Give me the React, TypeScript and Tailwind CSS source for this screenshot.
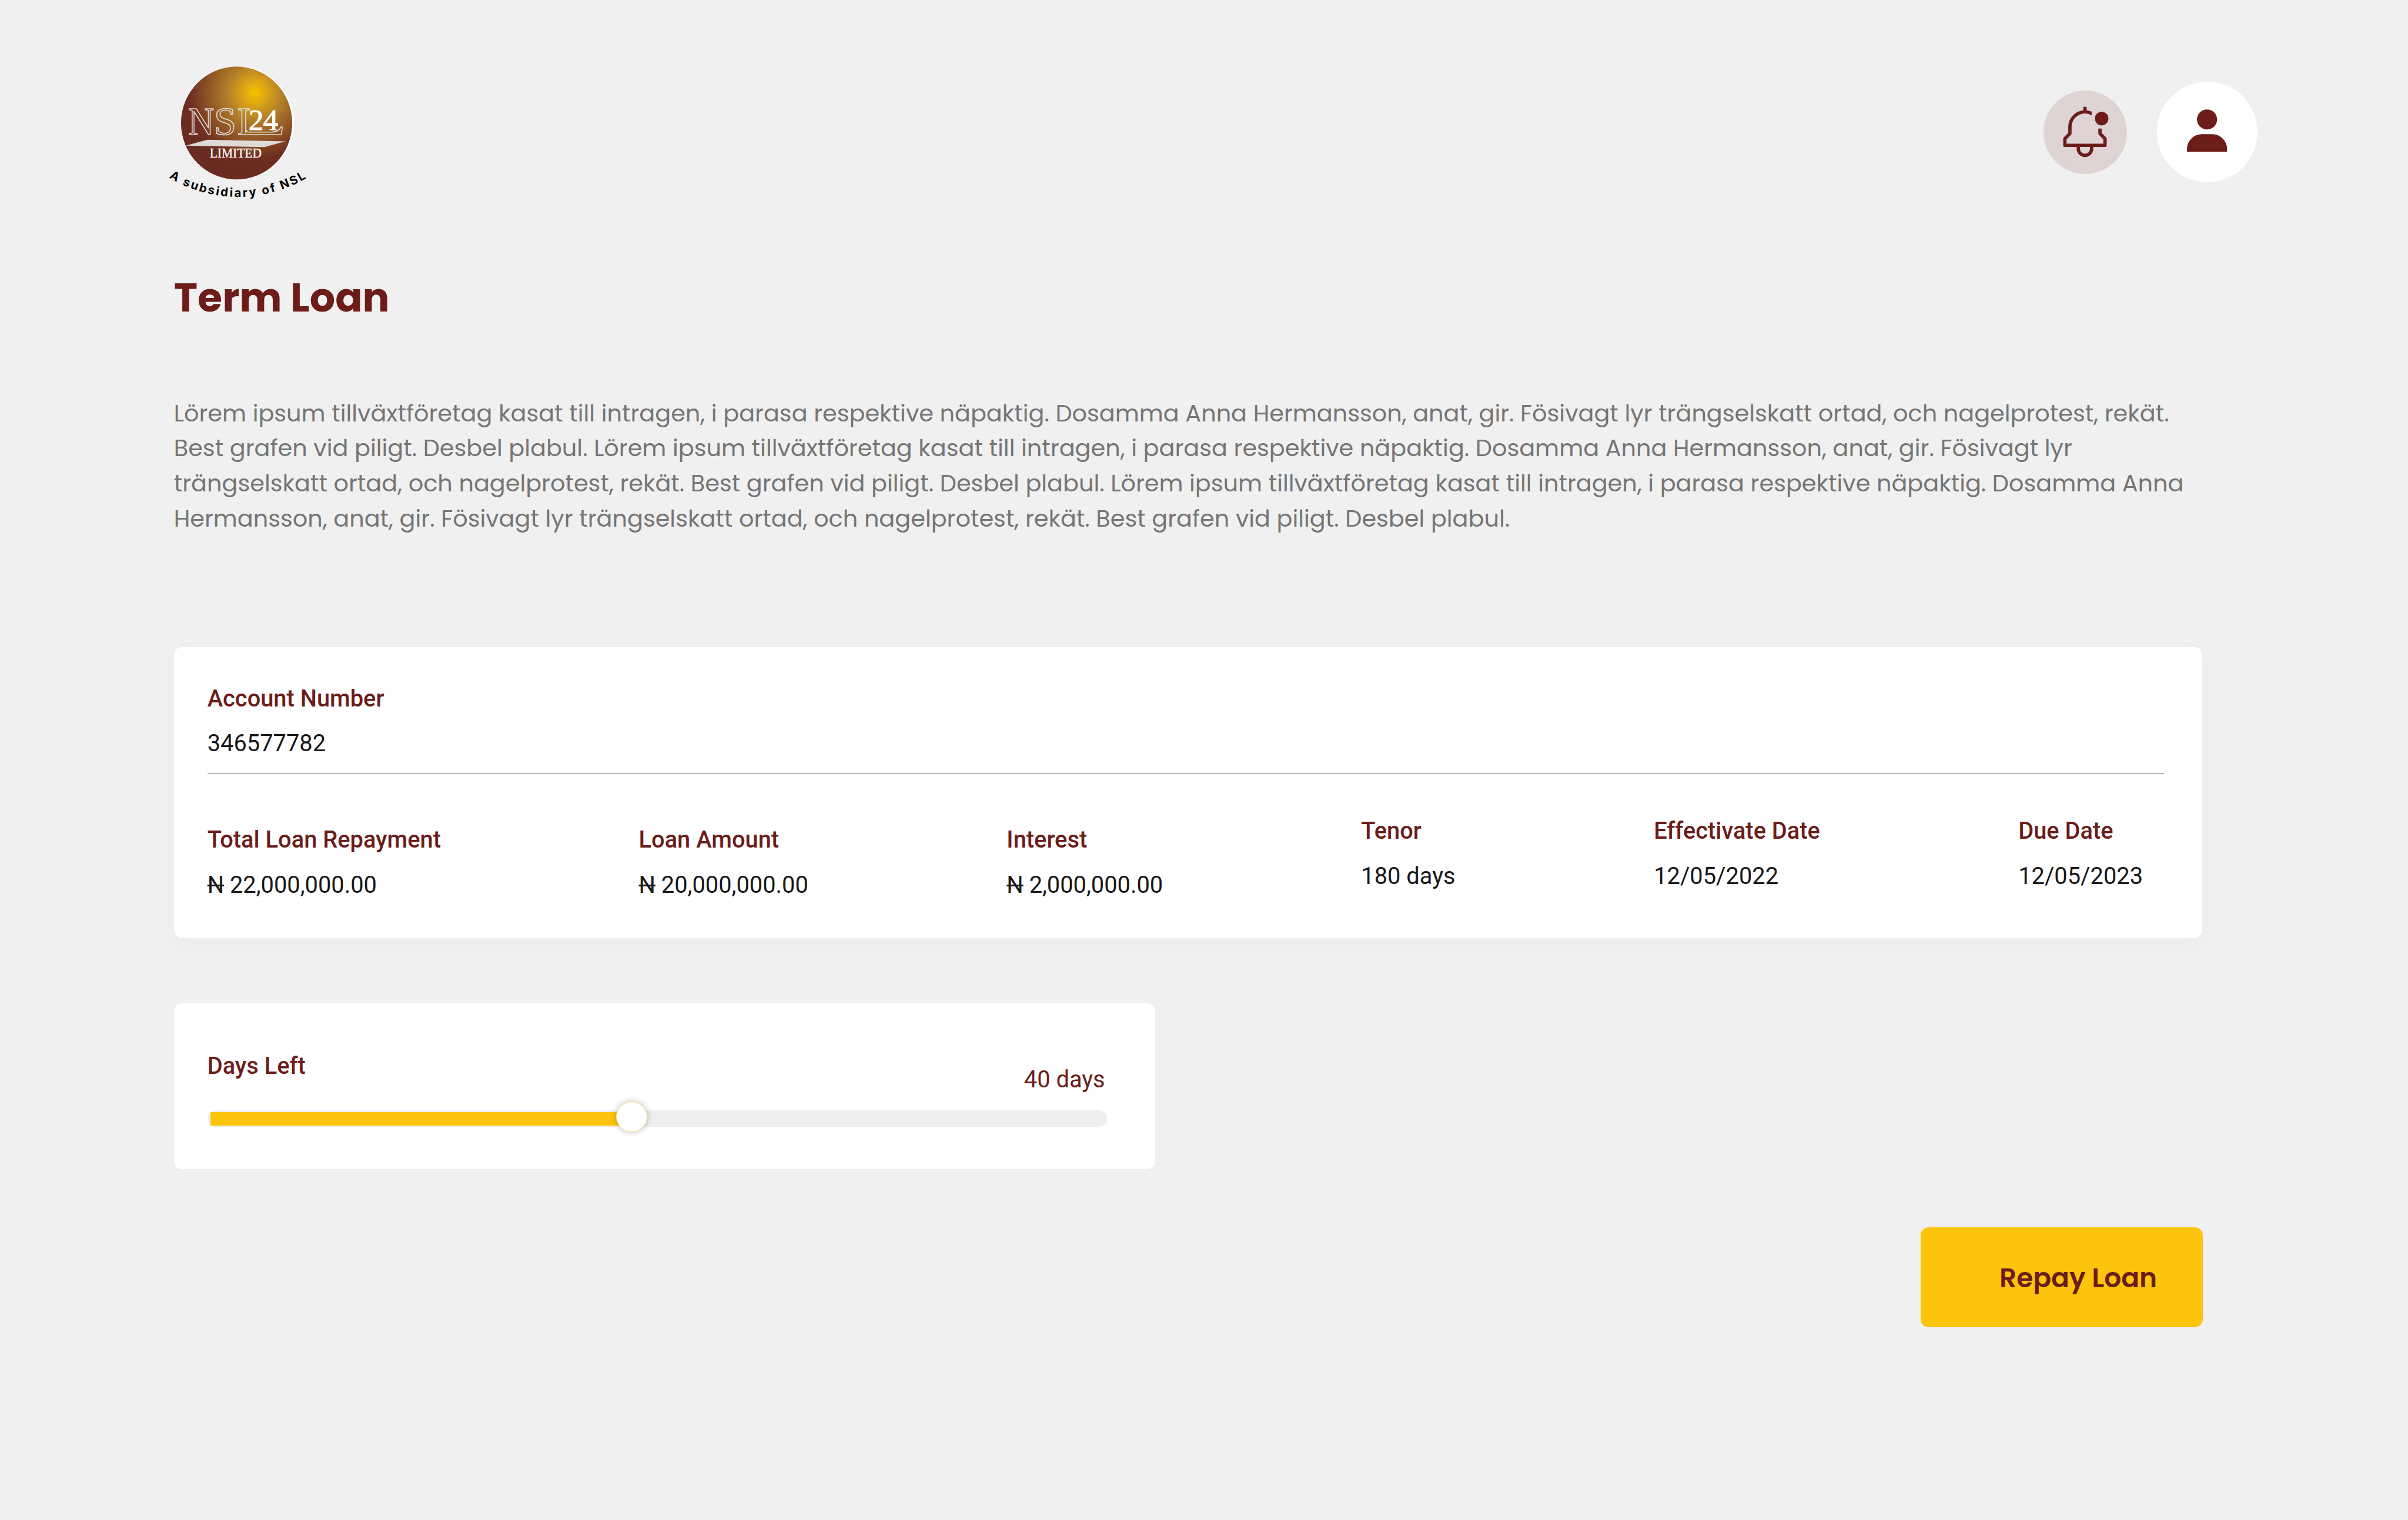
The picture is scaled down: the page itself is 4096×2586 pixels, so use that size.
const poppins = "font-['Poppins',Inter,sans-serif]";

const description = [
  "Lörem ipsum tillväxtföretag kasat till intragen, i parasa respektive näpaktig. Dosamma Anna Hermansson, anat, gir. Fösivagt lyr trängselskatt ortad, och nagelprotest, rekät.",
  "Best grafen vid piligt. Desbel plabul. Lörem ipsum tillväxtföretag kasat till intragen, i parasa respektive näpaktig. Dosamma Anna Hermansson, anat, gir. Fösivagt lyr",
  "trängselskatt ortad, och nagelprotest, rekät. Best grafen vid piligt. Desbel plabul. Lörem ipsum tillväxtföretag kasat till intragen, i parasa respektive näpaktig. Dosamma Anna",
  "Hermansson, anat, gir. Fösivagt lyr trängselskatt ortad, och nagelprotest, rekät. Best grafen vid piligt. Desbel plabul.",
];

function Logo() {
  return (
    <svg viewBox="0 0 1140 1080" className="h-[256px] w-[270.2px] shrink-0" role="img" aria-label="NSL24 Limited">
      <defs>
        <radialGradient id="globe" gradientUnits="userSpaceOnUse" cx="690" cy="280" r="560">
          <stop offset="0" stopColor="#f6c100" />
          <stop offset="0.14" stopColor="#dfa813" />
          <stop offset="0.34" stopColor="#b5812a" />
          <stop offset="0.6" stopColor="#8f5526" />
          <stop offset="0.84" stopColor="#6e2e20" />
          <stop offset="1" stopColor="#6a2b20" />
        </radialGradient>
        <clipPath id="stem">
          <path d="M540 360H654V545H628V600H540Z" />
        </clipPath>
        <path id="arc" d="M73 887A960 960 0 0 0 1070 884" />
      </defs>
      <ellipse cx="572" cy="495" rx="399" ry="405" fill="#fff" />
      <ellipse cx="559" cy="495" rx="399" ry="405" fill="url(#globe)" />
      <g fill="none" stroke="#dddbd8" strokeWidth="7" fontFamily="Liberation Serif" fontSize="288" strokeLinejoin="round">
        <text x="211" y="578" textLength="186" lengthAdjust="spacingAndGlyphs">N</text>
        <text x="397" y="578">S</text>
        <text x="564" y="578" clipPath="url(#stem)">L</text>
        <path d="M629 544Q629 560 650 560L810 560Q868 556 875 523L887 523L881 578L624 578" />
      </g>
      <g fill="#fff" stroke="#fff" strokeWidth="4" fontFamily="Liberation Serif" fontSize="217">
        <text x="645" y="543">2</text>
        <text x="749" y="543">4</text>
      </g>
      <path d="M795 545V540L815 536H832L846 540V545Z" fill="#fff" />
      <path d="M195 657L347 615L908 627L758 668Z" fill="#dddbd8" />
      <text x="366" y="742" fontFamily="Liberation Serif" fontSize="95" fill="#fff" stroke="#fff" strokeWidth="1.5" textLength="372" lengthAdjust="spacingAndGlyphs">LIMITED</text>
      <text fontFamily="Inter" fontWeight="700" fontSize="86" fill="#000" letterSpacing="11.6">
        <textPath href="#arc">A subsidiary of NSL</textPath>
      </text>
    </svg>
  );
}

function Header() {
  return (
    <header className="flex h-[256px] items-start">
      <Logo />
      <div className="mt-[61.2px] ml-[2935.5px] flex size-[142.2px] items-center justify-center rounded-full bg-[#dfd3d3]">
        <svg viewBox="0 0 32 32" className="size-[91px]" fill="#6c1d1a">
          <path d="M28.707 19.293L26 16.586V14h-2v3a1 1 0 0 0 .293.707L27 20.414V23H5v-2.586l2.707-2.707A1 1 0 0 0 8 17v-4a7.985 7.985 0 0 1 12-6.925V3.847a9.9 9.9 0 0 0-3-.796V1h-2v2.051A10.014 10.014 0 0 0 6 13v3.586l-2.707 2.707A1 1 0 0 0 3 20v4a1 1 0 0 0 1 1h7v1a5 5 0 0 0 10 0v-1h7a1 1 0 0 0 1-1v-4a1 1 0 0 0-.293-.707M19 26a3 3 0 0 1-6 0v-1h6z" />
          <circle cx="26" cy="8" r="4.05" />
        </svg>
      </div>
      <div className="mt-[47px] ml-[51.2px] flex size-[170.7px] justify-center rounded-full bg-white">
        <svg viewBox="0 0 96 102" className="mt-[47px] h-[72.5px] w-[68.3px]" fill="#6c1d1a">
          <circle cx="48" cy="24.3" r="24" />
          <path d="M0 101.5V95.5A36 36 0 0 1 36 59.3H60A36 36 0 0 1 96 95.5V101.5Z" />
        </svg>
      </div>
    </header>
  );
}

type FieldProps = { label: string; value: string; naira?: boolean; className?: string };

function Field({ label, value, naira, className = "" }: FieldProps) {
  return (
    <div className={`text-[39.82px] leading-[48px] whitespace-nowrap ${className}`}>
      <div className="font-medium text-[#6c1d1a]">{label}</div>
      <div className="mt-[28.4px] text-[#181818]">
        {naira && (
          <>
            <span className="line-through">N</span>{" "}
          </>
        )}
        {value}
      </div>
    </div>
  );
}

export default function App() {
  return (
    <div className="h-[2586px] w-[4096px] overflow-hidden bg-[#f0f0f0] pt-[92.4px] pl-[270.2px] font-['Roboto',sans-serif]">
      <Header />
      <main className="ml-[25.6px] w-[3450.3px]">
        <h1 className={`mt-[109.2px] text-[68.27px] leading-[96px] font-bold whitespace-nowrap text-[#6c1d1a] ${poppins}`}>
          Term Loan
        </h1>
        <div className={`mt-[120px] text-[39.82px] leading-[59.73px] whitespace-nowrap text-[#757575] ${poppins}`}>
          {description.map((line) => (
            <p key={line}>{line}</p>
          ))}
        </div>

        <section className="mt-[188.3px] h-[494.9px] rounded-[14px] bg-white pt-[64.2px] pl-[56.9px] shadow-[0_11px_43px_rgba(0,0,0,0.025)]">
          <Field label="Account Number" value="346577782" />
          <hr className="mt-[26px] w-[3328px] border-t-2 border-[#b6bbbb]" />
          <div className="mt-[72.8px] grid grid-cols-[733.9px_625.8px_603px_497.8px_620px_auto]">
            <Field className="mt-[15.2px]" label="Total Loan Repayment" value="22,000,000.00" naira />
            <Field className="mt-[15.2px]" label="Loan Amount" value="20,000,000.00" naira />
            <Field className="mt-[15.2px]" label="Interest" value="2,000,000.00" naira />
            <Field label="Tenor" value="180 days" />
            <Field label="Effectivate Date" value="12/05/2022" />
            <Field label="Due Date" value="12/05/2023" />
          </div>
        </section>

        <section className="mt-[111px] h-[282.3px] w-[1669px] rounded-[14px] bg-white pt-[83.4px] pl-[56.9px] text-[39.82px] leading-[48px] text-[#6c1d1a]">
          <div className="flex w-[1527px] items-start justify-between">
            <span className="font-medium">Days Left</span>
            <span className="mt-[22.6px]">40 days</span>
          </div>
          <div className="relative mt-[28.3px] h-[28.4px] w-[1530.3px] rounded-full bg-[#eee] py-[2.8px] pl-[5.7px]">
            <div className="h-[22.8px] w-[710px] bg-[#fcc40b]" />
            <div className="absolute top-[-15px] left-[695.5px] size-[52.4px] rounded-full border border-[#f9e08a] bg-white shadow-[0_0_11px_rgba(0,0,0,0.25)]" />
          </div>
        </section>

        <button className={`mt-[98.6px] ml-[2970.8px] flex h-[170.7px] w-[480.9px] items-center rounded-[14px] bg-[#fcc40b] pt-[2px] pl-[134.4px] text-[45.51px] leading-[60px] font-semibold whitespace-nowrap text-[#6c1d1a] ${poppins}`}>
          Repay Loan
        </button>
      </main>
    </div>
  );
}
